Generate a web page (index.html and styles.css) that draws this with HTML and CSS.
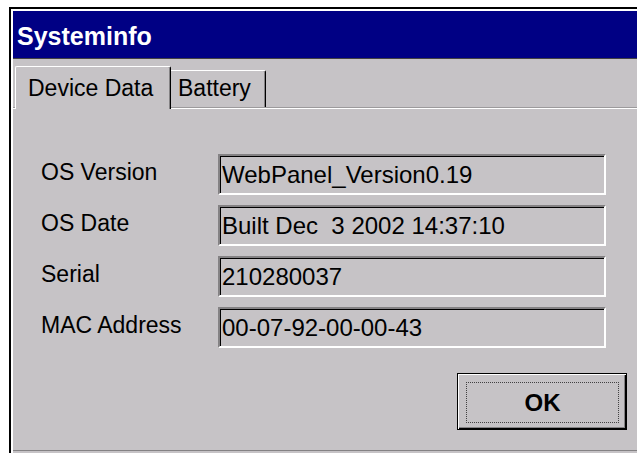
FILE: index.html
```html
<!DOCTYPE html>
<html lang="de">
<head>
<meta charset="utf-8">
<title>Systeminfo</title>
<link rel="stylesheet" href="styles.css">
</head>
<body>
<div class="window">
  <div class="frame">
    <div class="titlebar"><span class="title">Systeminfo</span></div>
    <div class="client">
      <div class="tabs">
        <div class="tab tab-active">Device Data</div>
        <div class="tab tab-idle">Battery</div>
      </div>
      <div class="panel">
        <div class="fields">
          <div class="label">OS Version</div>
          <div class="field">WebPanel_Version0.19</div>
          <div class="label">OS Date</div>
          <div class="field">Built Dec  3 2002 14:37:10</div>
          <div class="label">Serial</div>
          <div class="field">210280037</div>
          <div class="label">MAC Address</div>
          <div class="field">00-07-92-00-00-43</div>
        </div>
        <div class="actions">
          <button class="btn" type="button"><span class="focus">OK</span></button>
        </div>
      </div>
    </div>
  </div>
</div>
</body>
</html>
```
FILE: styles.css
```css
html, body {
  margin: 0;
  height: 453px;
  overflow: hidden;
  background: #fff;
}

body {
  font-family: "Liberation Sans", Arial, sans-serif;
  color: #000;
}

/* outer window edge: dark line, then light line */
.window {
  box-sizing: border-box;
  margin: 7px 0 0 9px;
  height: 446px;
  border-top: 2px solid #000;
  border-left: 2px solid #000;
}

.frame {
  box-sizing: border-box;
  height: 100%;
  border-top: 2px solid #fff;
  border-left: 2px solid #fff;
  background: #c6c3c6;
}

.titlebar {
  box-sizing: border-box;
  height: 48px;
  padding: 4px 0 0 4px;
  display: flex;
  align-items: center;
  background: #000084;
  border-bottom: 1px solid #424142;
  color: #fff;
  font-size: 25px;
  font-weight: bold;
}

.client {
  padding-top: 7px;
}

/* tab strip */
.tabs {
  display: flex;
  align-items: flex-end;
  padding-left: 2px;
  margin-bottom: -2px;
  position: relative;
  z-index: 1;
}

.tab {
  box-sizing: border-box;
  font-size: 23px;
  line-height: 23px;
  background: #c6c3c6;
  border-top: 1px solid #fff;
  border-right: 1px solid #000;
  box-shadow: inset -1px 0 0 #848284;
  white-space: nowrap;
}

.tab-active {
  width: 156px;
  height: 43px;
  padding: 10px 0 0 12px;
  border-left: 1px solid #fff;
  border-top-left-radius: 2px;
  border-top-right-radius: 2px;
}

.tab-idle {
  width: 95px;
  height: 37px;
  margin-bottom: 2px;
  padding: 6px 0 0 7px;
  border-top-right-radius: 2px;
}

/* page body of the tab control */
.panel {
  border-top: 1px solid #9c9a9c;
  box-shadow: inset 0 1px 0 #fff;
  border-bottom: 1px solid #848284;
  padding: 46px 10px 20px 28px;
}

.fields {
  display: grid;
  grid-template-columns: 177px 388px;
  grid-auto-rows: 41px;
  row-gap: 10px;
}

.label {
  font-size: 23px;
  line-height: 36px;
  white-space: nowrap;
}

.field {
  box-sizing: border-box;
  height: 41px;
  padding-left: 2px;
  font-size: 24px;
  line-height: 37px;
  white-space: pre;
  border: 2px solid;
  border-color: #848284 #fff #fff #848284;
  box-shadow: inset 1px 1px 0 #000, inset -1px -1px 0 #c6c3c6;
  background: #c6c3c6;
}

.actions {
  display: flex;
  justify-content: flex-end;
  margin-top: 25px;
}

.btn {
  box-sizing: border-box;
  width: 170px;
  height: 57px;
  padding: 0;
  display: flex;
  background: #c6c3c6;
  border: 1px solid #000;
  box-shadow: inset 1px 1px 0 #fff, inset -1px -1px 0 #000, inset -2px -2px 0 #848284;
  font-family: "Liberation Sans", Arial, sans-serif;
  font-size: 24px;
  font-weight: bold;
  color: #000;
}

.focus {
  flex: 1;
  margin: 8px 7px 6px 8px;
  border: 1px dotted #424142;
  display: flex;
  align-items: center;
  justify-content: center;
}
```
